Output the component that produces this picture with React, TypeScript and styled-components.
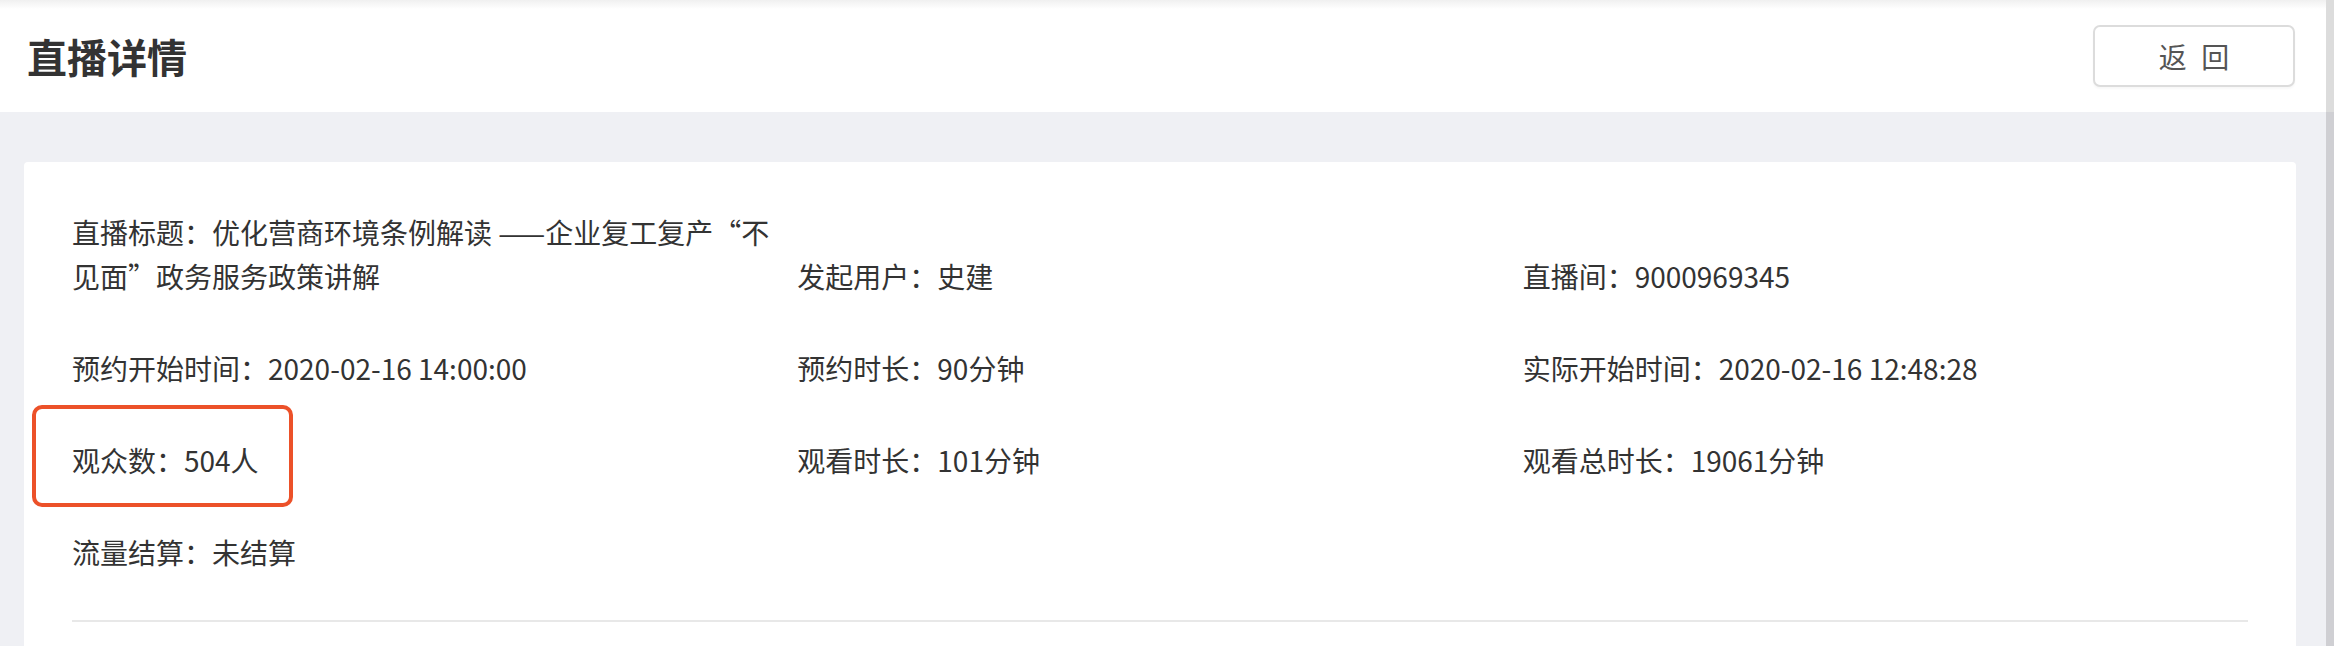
import styled, { createGlobalStyle } from 'styled-components';

const GlobalStyle = createGlobalStyle`
  html, body {
    margin: 0;
    height: 100%;
    overflow: hidden;
  }
  body {
    font-family: "Noto Sans CJK SC", "Noto Sans", sans-serif;
    color: #333;
  }
`;

const Frame = styled.div`
  display: grid;
  grid-template-columns: 1fr 8px;
  height: 100vh;
`;

const Page = styled.div`
  display: flex;
  flex-direction: column;
  min-width: 0;
`;

const Header = styled.header`
  height: 112px;
  flex-shrink: 0;
  display: flex;
  align-items: center;
  justify-content: space-between;
  padding: 0 31px 0 27px;
  box-sizing: border-box;
  background: linear-gradient(#f0f0f0, #ffffff 9px);
`;

const Title = styled.h1`
  margin: 0;
  font-size: 40px;
  font-weight: 700;
  color: #333;
`;

const BackButton = styled.button`
  width: 202px;
  height: 62px;
  border: 2px solid #dcdcdc;
  border-radius: 7px;
  background: #fff;
  box-shadow: 0 2px 2px rgba(0, 0, 0, 0.03);
  font-family: inherit;
  font-size: 28px;
  letter-spacing: 4px;
  text-indent: 4px;
  color: #555;
  cursor: pointer;
`;

const Main = styled.main`
  flex: 1;
  background: #eff0f4;
  padding: 50px 30px 0 24px;
`;

const Card = styled.section`
  background: #fff;
  border-radius: 4px;
  padding: 48px 48px 40px;
`;

const InfoGrid = styled.div`
  display: grid;
  grid-template-columns: repeat(3, 1fr);
  row-gap: 48px;
  align-items: end;
`;

const Field = styled.div`
  font-size: 28px;
  line-height: 44px;
  color: #333;
  padding-right: 12px;
`;

const Text = styled.span<{ $marked?: boolean }>`
  position: relative;
  display: inline-block;

  ${({ $marked }) =>
    $marked &&
    `
    &::after {
      content: '';
      position: absolute;
      top: -33px;
      bottom: -25px;
      left: -40px;
      right: -34px;
      border: 4px solid #ec5129;
      border-radius: 10px;
    }
  `}
`;

const Divider = styled.hr`
  margin: 46px 0 0;
  border: 0;
  height: 2px;
  background: #e8e8e8;
`;

const ScrollRail = styled.div`
  display: grid;
  grid-template-rows: 112px 1fr;
`;

const RailPart = styled.div<{ $tone: string }>`
  background: ${({ $tone }) => $tone};
`;

const fields: { text: string; marked?: boolean }[] = [
  { text: '直播标题：优化营商环境条例解读 ——企业复工复产“不见面”政务服务政策讲解' },
  { text: '发起用户：史建' },
  { text: '直播间：9000969345' },
  { text: '预约开始时间：2020-02-16 14:00:00' },
  { text: '预约时长：90分钟' },
  { text: '实际开始时间：2020-02-16 12:48:28' },
  { text: '观众数：504人', marked: true },
  { text: '观看时长：101分钟' },
  { text: '观看总时长：19061分钟' },
  { text: '流量结算：未结算' },
];

const App: React.FC = () => {
  return (
    <>
      <GlobalStyle />
      <Frame>
        <Page>
          <Header>
            <Title>直播详情</Title>
            <BackButton>返 回</BackButton>
          </Header>
          <Main>
            <Card>
              <InfoGrid>
                {fields.map((f) => (
                  <Field key={f.text}>
                    <Text $marked={f.marked}>{f.text}</Text>
                  </Field>
                ))}
              </InfoGrid>
              <Divider />
            </Card>
          </Main>
        </Page>
        <ScrollRail>
          <RailPart $tone="#dcdcdc" />
          <RailPart $tone="#cfcfd3" />
        </ScrollRail>
      </Frame>
    </>
  );
};

export default App;
